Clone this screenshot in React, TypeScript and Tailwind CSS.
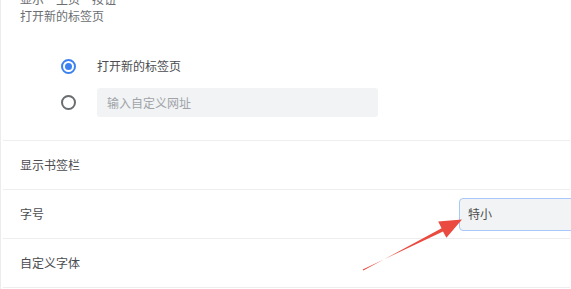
import React from "react";

function Radio({ checked }: { checked?: boolean }) {
  return checked ? (
    <span className="w-[15px] h-[15px] rounded-full border-2 border-[#3b82f0] flex items-center justify-center shrink-0">
      <span className="w-[7px] h-[7px] rounded-full bg-[#3b82f0]" />
    </span>
  ) : (
    <span className="w-[15px] h-[15px] rounded-full border-2 border-[#6a6d70] shrink-0" />
  );
}

export default function App() {
  return (
    <div
      className="relative w-[571px] h-[289px] overflow-hidden bg-white border-l border-[#ececec] text-[12px] text-[#4a4c4f]"
      style={{ fontFamily: '"Noto Sans CJK SC", "Noto Sans", sans-serif' }}
    >
      <div className="ml-[2px] mr-[1px]">
        {/* Home button section */}
        <div className="pl-[17px] pb-[23px] border-b border-[#eeeeee]">
          <div className="-mt-[9px] h-[16px] leading-[16px] text-[#6b6e72]">显示“主页”按钮</div>
          <div className="h-[16px] leading-[16px] mt-[1px] text-[#6b6e72]">打开新的标签页</div>
          <div className="pl-[41px]">
            <div className="mt-[27px] h-[30px] flex items-center gap-[21px]">
              <Radio checked />
              <span>打开新的标签页</span>
            </div>
            <div className="mt-[7px] h-[29px] flex items-center gap-[21px]">
              <Radio />
              <div className="w-[281px] h-[29px] bg-[#f1f3f4] rounded-[3px] flex items-center pl-[10px] text-[#a0a4a8]">
                输入自定义网址
              </div>
            </div>
          </div>
        </div>

        {/* Bookmarks bar */}
        <div className="h-[49px] pl-[17px] flex items-center border-b border-[#eeeeee]">显示书签栏</div>

        {/* Font size */}
        <div className="h-[49px] pl-[17px] flex items-center border-b border-[#eeeeee]">
          <span className="w-[439px] shrink-0">字号</span>
          <div className="w-[150px] h-[33px] shrink-0 bg-[#f1f3f4] border border-[#a8c7fa] rounded-[4px] flex items-center pl-[8px]">
            特小
          </div>
        </div>

        {/* Custom fonts */}
        <div className="h-[49px] pl-[17px] flex items-center border-b border-[#eeeeee]">自定义字体</div>
      </div>

      {/* Annotation arrow */}
      <svg className="absolute inset-0 pointer-events-none" width="571" height="289" viewBox="0 0 571 289">
        <polygon
          points="362.3,270.6 440.6,228.2 437.2,221.6 461,219.5 445.4,237.8 442,231.4 361.7,269.4"
          fill="#ea4a3f"
        />
      </svg>
    </div>
  );
}
